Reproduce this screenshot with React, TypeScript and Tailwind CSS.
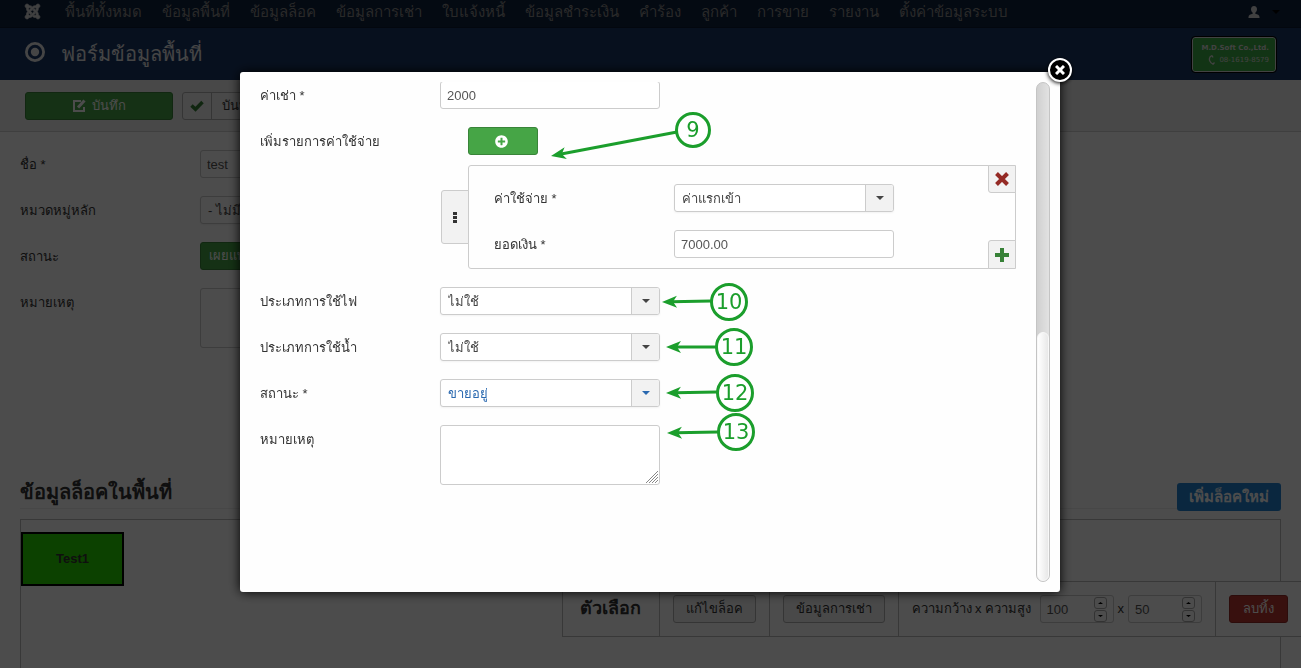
import type { ReactNode } from 'react';
import { FaJoomla, FaPlusCircle } from 'react-icons/fa';

const menu = [
  'พื้นที่ทั้งหมด',
  'ข้อมูลพื้นที่',
  'ข้อมูลล็อค',
  'ข้อมูลการเช่า',
  'ใบแจ้งหนี้',
  'ข้อมูลชำระเงิน',
  'คำร้อง',
  'ลูกค้า',
  'การขาย',
  'รายงาน',
  'ตั้งค่าข้อมูลระบบ',
];

// circle centre, radius, arrow start and arrow tip, from the modal's top left corner
const steps = [
  { n: 9, cx: 453, cy: 58, r: 16.5, from: [437, 60], tip: [311, 84] },
  { n: 10, cx: 489, cy: 230, r: 17.5, from: [471, 229], tip: [422, 230] },
  { n: 11, cx: 494, cy: 275, r: 17.5, from: [476, 275], tip: [426, 275] },
  { n: 12, cx: 495, cy: 321, r: 17.5, from: [477, 320], tip: [426, 321] },
  { n: 13, cx: 496, cy: 360, r: 17.5, from: [478, 360], tip: [427, 361] },
];

const inputClass =
  'block w-full h-7 rounded-[3px] border border-[#ccc] bg-white px-1.5 text-[13px] text-[#555] outline-none';

function Row({ id, label, children }: { id: string; label: string; children: ReactNode }) {
  return (
    <div className="flex">
      <label htmlFor={id} className="w-[180px] shrink-0 pt-1.5 text-[13px] leading-[18px] text-[#333]">
        {label}
      </label>
      <div className="min-w-0 flex-1">{children}</div>
    </div>
  );
}

function Select({ id, value, active }: { id: string; value: string; active?: boolean }) {
  return (
    <div className={`relative w-[220px] ${active ? 'text-[#2a69b0]' : 'text-[#444]'}`}>
      <select
        id={id}
        className="block w-full h-7 appearance-none rounded-[3px] border border-[#ccc] bg-white px-[7px] pt-px text-[13px] shadow-xs outline-none"
      >
        <option>{value}</option>
      </select>
      <span className="pointer-events-none absolute inset-y-px right-px flex w-7 items-center justify-center rounded-r-[2px] border-l border-[#ccc] bg-[#f2f2f2]">
        <Caret />
      </span>
    </div>
  );
}

function Caret() {
  return (
    <svg width="8" height="4" viewBox="0 0 8 4" fill="currentColor" aria-hidden="true">
      <path d="M0 0h8L4 4z" />
    </svg>
  );
}

function SizeInput({ label, value }: { label: string; value: number }) {
  return (
    <span className="relative block w-[74px]">
      <input
        type="number"
        aria-label={label}
        defaultValue={value}
        className={`${inputClass} [appearance:textfield] [&::-webkit-inner-spin-button]:appearance-none`}
      />
      <span className="absolute right-[7px] inset-y-px flex flex-col justify-center gap-px text-black">
        <button aria-label={`${label} +`} className="flex h-3 w-[13px] items-center justify-center rounded-[3px] border border-[#aaa]">
          <svg width="5" height="2" viewBox="0 0 5 2" fill="currentColor"><path d="M0 2h5L2.500 0z" /></svg>
        </button>
        <button aria-label={`${label} -`} className="flex h-3 w-[13px] items-center justify-center rounded-[3px] border border-[#aaa]">
          <svg width="5" height="2" viewBox="0 0 5 2" fill="currentColor"><path d="M0 0h5L2.500 2z" /></svg>
        </button>
      </span>
    </span>
  );
}

function Page() {
  return (
    <div className="flex min-h-screen flex-col bg-white">
      <nav className="flex h-7 items-center border-b border-[#0b1a30] bg-[#10223e] pb-1 pl-6 pr-[21px] text-[#898989]">
        <FaJoomla className="mr-6 h-[17px] w-[17px] shrink-0 stroke-current stroke-[20px] text-[#d9d9d9]" />
        <div className="flex gap-5 whitespace-nowrap text-[15px] leading-6">
          {menu.map((item) => (
            <a key={item} href="#">{item}</a>
          ))}
        </div>
        <button aria-label="user" className="ml-auto flex items-center gap-3 text-[#d9d9d9]">
          <svg width="12" height="12" viewBox="0 0 12 12" fill="currentColor">
            <path d="M6 0c2 0 3 1.400 3 3.200C9 4.700 8.300 6 7.300 6.700v1.100C9.500 8.200 11.500 9.300 11.500 11v1H.5v-1c0-1.700 2-2.800 4.200-3.200V6.700C3.700 6 3 4.700 3 3.200 3 1.400 4 0 6 0z" />
          </svg>
          <span className="text-black"><Caret /></span>
        </button>
      </nav>

      <header className="flex h-[52px] items-center justify-between bg-[#1a3867] px-[25px]">
        <h1 className="flex items-center gap-4 text-[20px] leading-9 text-[#e6e6e6]">
          <svg width="20" height="20" viewBox="0 0 20 20" fill="none" className="mb-1">
            <circle cx="10" cy="10" r="8.600" stroke="currentColor" strokeWidth="2.800" />
            <circle cx="10" cy="10" r="4.200" fill="currentColor" />
          </svg>
          ฟอร์มข้อมูลพื้นที่
        </h1>
        <div className="h-[35px] w-[84px] rounded-[3px] border border-[#ddd] bg-[#3fae46] pt-1 pr-1.5 text-right font-['DejaVu_Sans',sans-serif] leading-3 text-[#ddd] outline outline-black">
          <div className="whitespace-nowrap text-[7px] font-bold leading-3">M.D.Soft Co.,Ltd.</div>
          <div className="flex items-center justify-end gap-1 text-[7px]">
            <svg width="7" height="10" viewBox="0 0 7 10" fill="none" stroke="currentColor" strokeWidth="1.300">
              <path d="M4 0.500 2 2C.500 4.500 2 8 5 9.200L6.500 7.500M4 .5l1 2" />
            </svg>
            08-1619-8579
          </div>
        </div>
      </header>

      <div className="flex h-[52px] items-center gap-[9px] border-b border-[#d3d3d3] bg-[#f0f0f0] px-[25px]">
        <button className="flex h-7 w-[148px] items-center justify-center gap-1.5 rounded-[3px] border border-[#398439] bg-[#46a546] text-[13px] text-white">
          <svg width="13" height="13" viewBox="0 0 13 13" fill="none" stroke="currentColor">
            <path d="M8 2H1v10h10V8" strokeWidth="2" />
            <path d="M5 8.500 11.500 1.500" strokeWidth="3" />
          </svg>
          บันทึก
        </button>
        <button className="flex h-7 w-[160px] items-center rounded-[3px] border border-[#b3b3b3] bg-[#f3f3f3] text-[13px] text-[#333]">
          <span className="mr-2.5 flex h-full w-[29px] items-center justify-center border-r border-[#b3b3b3] text-[#378137]">
            <svg width="14" height="12" viewBox="0 0 14 12" fill="none" stroke="currentColor" strokeWidth="3.500">
              <path d="M1.500 5.500 5.500 9.200 12.500 2" />
            </svg>
          </span>
          บันทึก
        </button>
      </div>

      <form className="flex flex-col gap-[18px] px-5 pt-[18px]">
        <Row id="area-name" label="ชื่อ *">
          <div className="w-[220px]"><input id="area-name" defaultValue="test" className={inputClass} /></div>
        </Row>
        <Row id="area-parent" label="หมวดหมู่หลัก">
          <Select id="area-parent" value="- ไม่มี -" />
        </Row>
        <Row id="area-status" label="สถานะ">
          <button id="area-status" type="button" className="block h-7 rounded-[3px] border border-[#398439] bg-[#46a546] px-2 text-[13px] text-white">เผยแพร่</button>
        </Row>
        <Row id="area-note" label="หมายเหตุ">
          <textarea id="area-note" className="block h-[60px] w-[220px] rounded-[3px] border border-[#ccc]" />
        </Row>
      </form>

      <section className="mt-[130px] flex flex-1 flex-col px-5">
        <div className="relative mb-2.5 h-[31px] border-b border-[#eee]">
          <h2 className="text-[20px] font-bold leading-7 text-[#333]">ข้อมูลล็อคในพื้นที่</h2>
          <button className="absolute right-0 top-[5px] h-7 rounded-[3px] bg-[#2384d3] px-3 text-[15px] font-bold text-white">
            เพิ่มล็อคใหม่
          </button>
        </div>
        <div className="flex-1 border-x border-t border-[#bbb] pt-3">
          <div className="flex h-[54px] w-[103px] items-center justify-center border-2 border-black bg-[#2bd900] text-[13px] font-bold text-[#333]">
            Test1
          </div>
        </div>
      </section>

      <div className="fixed bottom-[31px] right-0 flex h-14 border border-r-0 border-[#bbb] bg-white text-[13px] text-[#333]">
        <h3 className="w-[97px] border-r border-[#bbb] pt-3 text-center text-[18px] font-bold leading-7">ตัวเลือก</h3>
        <div className="border-r border-[#bbb] px-[13px] pt-[13px]">
          <button className="h-7 rounded-[3px] border border-[#b3b3b3] bg-[#f3f3f3] px-3">แก้ไขล็อค</button>
        </div>
        <div className="border-r border-[#bbb] px-[13px] pt-[13px]">
          <button className="h-7 rounded-[3px] border border-[#b3b3b3] bg-[#f3f3f3] px-3">ข้อมูลการเช่า</button>
        </div>
        <div className="flex h-[54px] items-center gap-1 border-r border-[#bbb] px-[13px]">
          <span className="w-[124px] whitespace-nowrap">ความกว้าง x ความสูง</span>
          <SizeInput label="ความกว้าง" value={100} />
          <span>x</span>
          <SizeInput label="ความสูง" value={50} />
        </div>
        <div className="px-[13px] pt-[13px]">
          <button className="h-7 w-[59px] rounded-[3px] border border-[#942a25] bg-[#bd362f] text-white">ลบทิ้ง</button>
        </div>
      </div>
    </div>
  );
}

function CostBox() {
  return (
    <div className="relative mt-2.5 ml-7 flex h-[104px] w-[548px] flex-col gap-[18px] rounded-[3px] border border-[#ccc] pt-[18px] pl-[25px]">
      <Row id="cost-type" label="ค่าใช้จ่าย *">
        <Select id="cost-type" value="ค่าแรกเข้า" />
      </Row>
      <Row id="cost-amount" label="ยอดเงิน *">
        <div className="w-[220px]"><input id="cost-amount" defaultValue="7000.00" className={inputClass} /></div>
      </Row>
      <button aria-label="move" className="absolute -left-7 top-6 flex h-[54px] w-7 items-center justify-center rounded-l-[3px] border border-[#ccc] bg-[#f2f2f2] text-[#333]">
        <svg width="4" height="11" viewBox="0 0 4 11" fill="currentColor"><path d="M0 0h4v3H0zM0 4h4v3H0zM0 8h4v3H0z" /></svg>
      </button>
      <button aria-label="remove" className="absolute -right-px -top-px flex h-7 w-7 items-center justify-center rounded-bl-[3px] border border-[#ccc] bg-[#f2f2f2] text-[#942a25]">
        <svg width="14" height="14" viewBox="0 0 14 14" stroke="currentColor" strokeWidth="4"><path d="M1.500 1.500l11 11M12.500 1.500l-11 11" /></svg>
      </button>
      <button aria-label="add" className="absolute -right-px -bottom-px flex h-[29px] w-7 items-center justify-center rounded-tl-[3px] border border-[#ccc] bg-[#f2f2f2] text-[#378137]">
        <svg width="14" height="14" viewBox="0 0 14 14" stroke="currentColor" strokeWidth="4"><path d="M7 0v14M0 7h14" /></svg>
      </button>
    </div>
  );
}

function Steps() {
  return (
    <svg className="pointer-events-none absolute inset-0 h-full w-full" fill="none" stroke="#1b9e2c" strokeWidth="3">
      {steps.map(({ n, cx, cy, r, from, tip }) => {
        const angle = (Math.atan2(tip[1] - from[1], tip[0] - from[0]) * 180) / Math.PI;
        const length = Math.hypot(tip[0] - from[0], tip[1] - from[1]);
        return (
          <g key={n}>
            <g transform={`translate(${from[0]} ${from[1]}) rotate(${angle})`}>
              <path d={`M0 0H${length - 9}`} />
              <path d={`M${length} 0l-15-6 4 6-4 6z`} fill="#1b9e2c" stroke="none" />
            </g>
            <circle cx={cx} cy={cy} r={r} fill="white" />
            <text
              x={cx}
              y={cy + 7}
              textAnchor="middle"
              fill="#1b9e2c"
              stroke="none"
              className="font-['DejaVu_Sans',sans-serif] text-[21px]"
            >
              {n}
            </text>
          </g>
        );
      })}
    </svg>
  );
}

function Modal() {
  return (
    <div role="dialog" className="relative flex h-[520px] w-[820px] rounded-[3px] bg-[#fefefe] p-2.5 shadow-[0_0_12px_#000]">
      <form className="flex min-w-0 flex-1 flex-col overflow-hidden pl-2.5">
        <div className="-mt-px flex flex-col gap-[18px]">
          <Row id="rent" label="ค่าเช่า *">
            <div className="w-[220px]"><input id="rent" defaultValue="2000" className={inputClass} /></div>
          </Row>
          <Row id="add-cost" label="เพิ่มรายการค่าใช้จ่าย">
            <button id="add-cost" type="button" className="ml-7 flex h-7 w-[70px] items-center justify-center rounded-[3px] border border-[#398439] bg-[#46a546] pr-1 text-white">
              <FaPlusCircle className="h-[13px] w-[13px]" />
            </button>
            <CostBox />
          </Row>
          <Row id="power" label="ประเภทการใช้ไฟ">
            <Select id="power" value="ไม่ใช้" />
          </Row>
          <Row id="water" label="ประเภทการใช้น้ำ">
            <Select id="water" value="ไม่ใช้" />
          </Row>
          <Row id="status" label="สถานะ *">
            <Select id="status" value="ขายอยู่" active />
          </Row>
          <Row id="note" label="หมายเหตุ">
            <div className="relative w-[220px]">
              <textarea id="note" className="block h-[60px] w-full resize-none rounded-[3px] border border-[#ccc] bg-white" />
              <svg width="12" height="12" viewBox="0 0 12 12" stroke="#888" className="pointer-events-none absolute right-0.5 bottom-0.5">
                <path d="M0 12 12 0M3 12l9-9M6 12l6-6M9 12l3-3" />
              </svg>
            </div>
          </Row>
        </div>
      </form>
      <div className="flex w-3.5 flex-col justify-end rounded-full border border-[#c4c4c4] bg-linear-to-r from-[#d0d0d0] to-[#e2e2e2]">
        <div className="h-1/2 rounded-full border border-[#f8f8f8] bg-linear-to-r from-white to-[#e8e8e8]" />
      </div>
      <Steps />
      <button aria-label="close" className="absolute -right-3 -top-3.5 flex h-6 w-6 items-center justify-center rounded-full border-2 border-white bg-black text-white shadow-[0_1px_4px_#000]">
        <svg width="10" height="10" viewBox="0 0 10 10" stroke="currentColor" strokeWidth="3"><path d="M1 1l8 8M9 1L1 9" /></svg>
      </button>
    </div>
  );
}

export default function App() {
  return (
    <div className="h-screen overflow-hidden font-['Liberation_Sans',sans-serif]">
      <Page />
      <div className="fixed inset-0 flex items-start justify-center bg-black/70 pt-[72px] pr-px">
        <Modal />
      </div>
    </div>
  );
}
